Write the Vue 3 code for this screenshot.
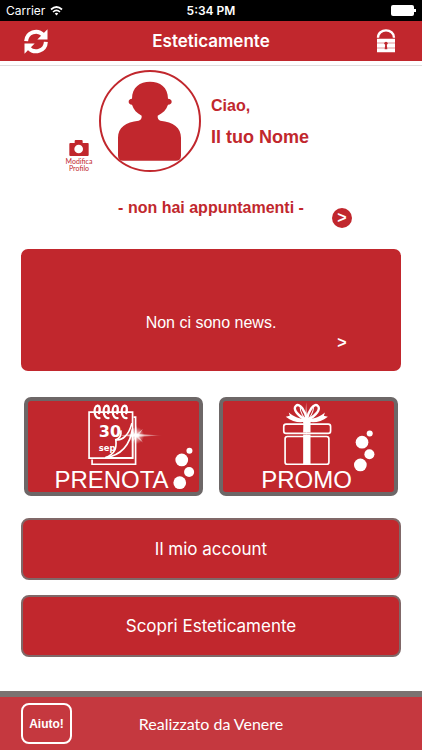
<template>
  <div class="page">
    <div class="status">
      <div class="carrier">
        <span>Carrier</span>
        <svg width="13" height="10" viewBox="0 0 26 20">
          <path d="M2 7 Q13 -3 24 7" fill="none" stroke="#fff" stroke-width="3.4" />
          <path d="M6 12 Q13 5.500 20 12" fill="none" stroke="#fff" stroke-width="3.2" />
          <path d="M9.500 15 Q13 11.500 16.500 15 L13 19 Z" fill="#fff" />
        </svg>
      </div>
      <span class="time">5:34 PM</span>
      <svg class="battery" width="25" height="11" viewBox="0 0 25 11">
        <rect width="23" height="11" rx="2" fill="#fff" />
        <rect x="23" y="4" width="2" height="3" fill="#fff" />
      </svg>
    </div>

    <header class="header">
      <button class="icon-btn" type="button" aria-label="Aggiorna">
        <svg width="24" height="25" viewBox="72 88 72 76">
          <g v-for="angle in [0, 180]" :key="angle" :transform="`rotate(${angle} 108 126)`">
            <path d="M78 125 A30 30 0 0 1 130 106" fill="none" stroke="#fff" stroke-width="12" />
            <path d="M143 89 V120 H112 Z" fill="#fff" />
          </g>
        </svg>
      </button>
      <h1>Esteticamente</h1>
      <button class="icon-btn lock" type="button" aria-label="Accesso">
        <svg width="20" height="24" viewBox="496 91 60 72">
          <path d="M502 117 C502 88 550 88 550 117" fill="none" stroke="#fff" stroke-width="7" />
          <path d="M499 120 H553 V132 H499 Z M499 134 H553 V147 H499 Z M499 149 H553 V161 H499 Z" fill="#fff" />
          <circle cx="526" cy="134" r="5" fill="#c1272d" />
          <path d="M524 134 H528 L530 152 H522 Z" fill="#c1272d" />
        </svg>
      </button>
    </header>

    <main>
      <section class="profile">
        <button class="edit" type="button">
          <svg width="20" height="16" viewBox="0 0 60 48">
            <path d="M2 9 H17 V3 Q17 0 20 0 H38 Q41 0 41 3 V9 H57 Q59 9 59 12 V45 Q59 48 56 48 H4 Q1 48 1 45 V12 Q1 9 4 9 Z" fill="#c1272d" />
            <circle cx="29" cy="27" r="13" fill="#fff" />
          </svg>
          <span>Modifica<br />Profilo</span>
        </button>
        <svg class="avatar" width="102" height="102" viewBox="147 15 306 306">
          <circle cx="300" cy="168" r="150" fill="#fff" stroke="#c1272d" stroke-width="6" />
          <path
            d="M246 101 C246 66 270 50 300 50 C330 50 354 66 354 101 Q365 102 365 110 Q365 118 354 119 C349 134 339 144 323 152 Q322 164 331 167 C370 171 393 188 393 218 V272 Q393 287 378 287 H219 Q204 287 204 272 V218 C204 188 227 171 266 167 Q276 164 275 152 C260 144 251 134 246 119 Q236 118 236 110 Q236 102 246 101 Z"
            fill="#c1272d"
          />
        </svg>
        <div class="greeting">
          <p class="hello">Ciao,</p>
          <p class="name">Il tuo Nome</p>
        </div>
      </section>

      <section class="appointments">
        <p>- non hai appuntamenti -</p>
        <button type="button" class="round" aria-label="Appuntamenti">&gt;</button>
      </section>

      <section class="news">
        <p>Non ci sono news.</p>
        <button type="button" class="more" aria-label="News">&gt;</button>
      </section>

      <section class="tiles">
        <button type="button" class="tile">
          <svg class="art" viewBox="39 34 510 272">
            <defs>
              <linearGradient id="ray" x1="0" x2="1">
                <stop offset="0" stop-color="#fff" stop-opacity="0" />
                <stop offset="0.4" stop-color="#fff" />
                <stop offset="1" stop-color="#fff" stop-opacity="0" />
              </linearGradient>
              <radialGradient id="glow">
                <stop offset="0" stop-color="#fff" stop-opacity="0.9" />
                <stop offset="1" stop-color="#fff" stop-opacity="0" />
              </radialGradient>
            </defs>
            <g fill="none" stroke="#fff" stroke-width="5">
              <path d="M354 82 H360 V223 H230 V209" />
              <path d="M221 67 H351 V205 H221 Z" fill="#c1272d" />
            </g>
            <g fill="none" stroke="#fff" stroke-width="7" stroke-linecap="round">
              <path v-for="x in rings" :key="x" :d="`M${x + 7} 85 C${x - 10} 88 ${x - 12} 50 ${x + 1} 48 C${x + 9} 48 ${x + 9} 60 ${x + 6} 70`" />
            </g>
            <text x="250" y="143" class="day">30</text>
            <text x="250" y="182" class="month">sep</text>
            <path d="M348 105 C338 138 318 148 300 150 C303 174 300 190 272 203 H349 Z" fill="#c1272d" />
            <g fill="none" stroke="#fff" stroke-width="5">
              <path d="M349 100 C340 136 320 154 301 150 C304 176 298 192 269 204" />
              <path d="M351 116 C344 164 320 196 269 204 H351 Z" />
              <path d="M316 122 Q319 144 301 150" />
            </g>
            <ellipse cx="362" cy="137" rx="24" ry="26" fill="url(#glow)" />
            <path d="M302 137 L362 133 L440 137 L362 141 Z" fill="url(#ray)" />
            <path d="M362 106 L364 132 L382 118 L368 138 L382 158 L363 142 L348 159 L358 138 L344 120 L359 132 Z" fill="#fff" opacity="0.6" />
            <g fill="#fff">
              <circle cx="521" cy="183" r="9" />
              <circle cx="498" cy="210" r="19" />
              <circle cx="520" cy="246" r="15" />
              <circle cx="492" cy="278" r="19" />
            </g>
          </svg>
          <span>PRENOTA</span>
        </button>
        <button type="button" class="tile">
          <svg class="art" viewBox="36 34 510 272">
            <g fill="none" stroke="#fff" stroke-width="5">
              <rect x="217" y="103" width="140" height="28" rx="7" />
              <rect x="221" y="140" width="131" height="83" rx="7" />
              <path d="M283 90 C258 78 244 58 253 49 C265 37 282 65 286 90" stroke-width="7" />
              <path d="M289 90 C314 78 328 58 319 49 C307 37 290 65 286 90" stroke-width="7" />
              <path d="M281 88 C266 67 263 57 268 48 M291 88 C306 67 309 57 304 48" stroke-width="3" />
            </g>
            <g fill="#fff">
              <path d="M284 88 C261 87 247 80 232 68 L235 78 L223 81 C242 96 263 100 281 96 Z" />
              <path d="M288 88 C311 87 325 80 340 68 L337 78 L349 81 C330 96 309 100 291 96 Z" />
              <path d="M276 88 H297 V225 H275 V134 H297 V128 H275 Z" />
              <circle cx="286" cy="94" r="11" />
            </g>
            <path d="M284 38 L287 82 L303 90 L288 99 L285 142 L281 99 L258 92 L281 82 Z" fill="#fff" opacity="0.6" />
            <g fill="#fff">
              <circle cx="474" cy="131" r="9" />
              <circle cx="451" cy="157" r="19" />
              <circle cx="473" cy="193" r="15" />
              <circle cx="446" cy="225" r="19" />
            </g>
          </svg>
          <span>PROMO</span>
        </button>
      </section>

      <nav class="links">
        <button v-for="link in links" :key="link" type="button">{{ link }}</button>
      </nav>
    </main>

    <footer class="footer">
      <button type="button" class="help">Aiuto!</button>
      <p>Realizzato da Venere</p>
    </footer>
  </div>
</template>

<script setup>
const links = ['Il mio account', 'Scopri Esteticamente']

// x positions of the calendar binding rings
const rings = [245, 272, 299, 326]
</script>

<style>
body {
  margin: 0;
  background: #fff;
}
</style>

<style scoped>
.page {
  display: flex;
  flex-direction: column;
  min-height: 100vh;
  font-family: "Liberation Sans", Arial, sans-serif;
  color: #c1272d;
}

p,
h1 {
  margin: 0;
}

button {
  padding: 0;
  border: none;
  background: none;
  color: inherit;
  font-family: inherit;
  cursor: pointer;
}

svg {
  display: block;
}

.status {
  display: grid;
  grid-template-columns: 1fr auto 1fr;
  align-items: center;
  height: 21px;
  padding: 0 6px;
  background: #000;
  color: #fff;
  font-family: Inter, sans-serif;
  font-size: 12px;
}

.carrier {
  display: flex;
  align-items: center;
  gap: 5px;
}

.time {
  font-weight: 600;
}

.battery {
  justify-self: end;
}

.header {
  display: grid;
  grid-template-columns: 1fr auto 1fr;
  align-items: center;
  height: 40px;
  padding: 0 24px;
  background: #c1272d;
  color: #fff;
}

.header h1 {
  font-family: Inter, sans-serif;
  font-size: 17px;
  font-weight: 600;
  line-height: 24px;
}

.icon-btn {
  justify-self: start;
}

.lock {
  justify-self: end;
  margin-right: 2px;
}

main {
  flex: 1;
  margin-top: 4px;
  padding: 4px 21px 0;
  border-top: 1px solid #dedede;
}

.profile {
  display: flex;
  gap: 6px;
  padding-left: 44px;
}

.edit {
  display: flex;
  flex-direction: column;
  align-items: center;
  align-self: flex-end;
  gap: 2px;
  width: 28px;
  font-family: Lato, sans-serif;
  font-size: 7px;
  line-height: 7px;
}

.greeting {
  padding: 26px 0 0 4px;
  font-weight: bold;
}

.hello {
  font-size: 16px;
  line-height: 20px;
}

.name {
  margin-top: 10px;
  font-size: 18px;
  line-height: 22px;
}

.appointments {
  display: grid;
  grid-template-columns: 1fr auto 1fr;
  column-gap: 28px;
  margin-top: 26px;
}

.appointments p {
  grid-column: 2;
  font-size: 16px;
  font-weight: bold;
  line-height: 20px;
}

.round {
  width: 20px;
  height: 20px;
  margin-top: 10px;
  border-radius: 50%;
  background: #c1272d;
  color: #fff;
  font-size: 16px;
  font-weight: bold;
  line-height: 20px;
}

.news {
  display: flex;
  flex-direction: column;
  justify-content: flex-end;
  min-height: 104px;
  margin-top: 21px;
  padding-bottom: 18px;
  border-radius: 7px;
  background: #c1272d;
  color: #fff;
  text-align: center;
}

.news p {
  font-size: 16px;
  line-height: 20px;
}

.more {
  align-self: flex-end;
  width: 20px;
  margin-right: 49px;
  font-size: 16px;
  font-weight: bold;
  line-height: 20px;
}

.tiles {
  display: grid;
  grid-template-columns: 1fr 1fr;
  gap: 16px;
  margin: 26px 3px 0;
}

.tile {
  position: relative;
  display: flex;
  align-items: flex-end;
  justify-content: center;
  height: 99px;
  padding-right: 4px;
  border: 4px solid #6d6767;
  border-radius: 7px;
  background: #c1272d;
  color: #fff;
  font-size: 24px;
  line-height: 24px;
}

.art {
  position: absolute;
  inset: 0;
  width: 100%;
  height: 100%;
}

.day,
.month {
  fill: #fff;
  font-family: "DejaVu Sans", sans-serif;
  font-weight: bold;
}

.day {
  font-size: 48px;
}

.month {
  font-size: 25px;
}

.links {
  display: flex;
  flex-direction: column;
  gap: 15px;
  margin: 22px 0;
}

.links button {
  height: 62px;
  border: 2px solid #806868;
  border-radius: 8px;
  background: #c1272d;
  color: #fff;
  font-family: Inter, sans-serif;
  font-size: 17px;
}

.footer {
  display: grid;
  grid-template-columns: 1fr auto 1fr;
  align-items: center;
  height: 53px;
  padding: 0 21px;
  border-top: 6px solid #7c7271;
  background: #c5383f;
  color: #fff;
}

.help {
  width: 51px;
  height: 41px;
  border: 2px solid #fff;
  border-radius: 8px;
  font-size: 12px;
  font-weight: bold;
}

.footer p {
  font-family: Lato, sans-serif;
  font-size: 16px;
  line-height: 20px;
}
</style>
